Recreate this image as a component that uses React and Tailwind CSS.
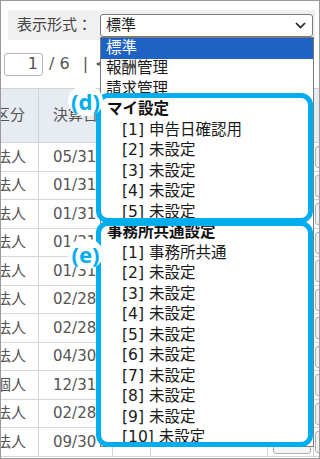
export default function App() {
  const rows = [
    ["法人", "05/31", 29],
    ["法人", "01/31", 28],
    ["法人", "01/31", 29],
    ["法人", "01/31", 28],
    ["法人", "01/31", 29],
    ["法人", "02/28", 28],
    ["法人", "02/28", 29],
    ["法人", "04/30", 28],
    ["個人", "12/31", 29],
    ["法人", "02/28", 28],
    ["法人", "09/30", 29],
  ];
  const my = ["[1] 申告日確認用", "[2] 未設定", "[3] 未設定", "[4] 未設定", "[5] 未設定"];
  const office = [
    "[1] 事務所共通",
    "[2] 未設定",
    "[3] 未設定",
    "[4] 未設定",
    "[5] 未設定",
    "[6] 未設定",
    "[7] 未設定",
    "[8] 未設定",
    "[9] 未設定",
    "[10] 未設定",
  ];

  return (
    <div className="relative w-[320px] h-[459px] overflow-hidden border border-[#9a9a9a] bg-white font-['DejaVu_Sans','Noto_Sans_CJK_JP',sans-serif] text-[#555]">
      {/* top bar */}
      <div className="ml-[7px] mr-[4px] mt-[9px] h-[30px] bg-[#f0f0f0] flex items-center">
        <span className="ml-[9px] text-[15px] text-[#444] leading-none">表示形式：</span>
        <div className="ml-auto mr-[2px] w-[213px] h-[23px] bg-white border border-[#7a7a7a] rounded-[3px] flex items-center pl-[5px] pr-[6px]">
          <span className="text-[15px] text-[#222] leading-none">標準</span>
          <svg className="ml-auto" width="11" height="7" viewBox="0 0 11 7">
            <path d="M1 1 L5.5 5.5 L10 1" fill="none" stroke="#222" strokeWidth="1.7" />
          </svg>
        </div>
      </div>

      {/* pagination */}
      <div className="h-[48px] flex items-center text-[16px] text-[#555]">
        <div className="ml-[3px] w-[39px] h-[23px] border border-[#b5b5b5] rounded-[3px] flex items-center justify-end pr-[4px] leading-none">
          1
        </div>
        <span className="ml-[6px] leading-none">/ 6</span>
        <span className="ml-[13px] leading-none">|</span>
        <span className="ml-[7px] leading-none">&lt;</span>
      </div>

      {/* table */}
      <div className="ml-[-31px] w-[400px]">
        <div className="flex h-[55px] bg-[#e6ecf2] border-t border-b border-[#cfd4da] text-[15px] text-[#555]">
          <div className="w-[69px] border-r border-[#cfd4da] flex items-center pl-[25px]">区分</div>
          <div className="w-[74px] border-r border-[#cfd4da] flex items-center pl-[14px]">決算日</div>
          <div className="w-[38px] border-r border-[#cfd4da]"></div>
          <div className="w-[117px] border-r border-[#cfd4da]"></div>
          <div className="w-[46px] border-r border-[#cfd4da]"></div>
          <div className="w-[40px]"></div>
        </div>
        {rows.map(([k, d, h], i) => (
          <div
            key={i}
            className={`flex border-b border-[#d6d6d6] text-[15px] text-[#555] ${h === 29 ? "h-[29px]" : "h-[28px]"}`}
          >
            <div className="w-[69px] border-r border-[#d6d6d6] flex items-center pl-[26px]">{k}</div>
            <div className="w-[74px] border-r border-[#d6d6d6] flex items-center pl-[14px] text-[15px]">{d}</div>
            <div className="w-[38px] border-r border-[#d6d6d6]"></div>
            <div className="w-[117px] border-r border-[#d6d6d6]"></div>
            <div className="w-[46px] border-r border-[#d6d6d6] flex items-center pl-[5px]">
              <div className="w-[38px] h-[12px] mt-[12px] border border-[#b0b0b0] rounded-[3px] bg-[#f4f4f4]"></div>
            </div>
            <div className="w-[40px] flex items-center pl-[1px]">
              <div className="w-[30px] h-[22px] border border-[#b0b0b0] rounded-[3px] bg-[#f0f0f0]"></div>
            </div>
          </div>
        ))}
      </div>

      {/* dropdown list */}
      <div className="absolute left-[99px] top-[36px] w-[214px] h-[410px] bg-white border border-[#7a7a7a] overflow-hidden text-[15.5px] text-[#1a1a1a]">
        <div className="h-[20.5px] bg-[#1e63c4] text-white flex items-center pl-[5px] leading-none">標準</div>
        <div className="h-[20.5px] flex items-center pl-[5px] leading-none">報酬管理</div>
        <div className="h-[20.5px] flex items-center pl-[5px] leading-none">請求管理</div>
        <div className="h-[20.5px] flex items-center pl-[6px] leading-none font-bold text-[#111]">マイ設定</div>
        {my.map((t, i) => (
          <div key={i} className="h-[20.5px] flex items-center pl-[21px] leading-none">{t}</div>
        ))}
        <div className="h-[20.5px] flex items-center pl-[6px] leading-none font-bold text-[#111]">事務所共通設定</div>
        {office.map((t, i) => (
          <div key={i} className="h-[20.5px] flex items-center pl-[21px] leading-none">{t}</div>
        ))}
      </div>

      {/* annotation boxes */}
      <div className="absolute left-[95px] top-[92px] w-[217px] h-[130px] border-[5px] border-[#00adef] rounded-[12px]"></div>
      <div className="absolute left-[95px] top-[220px] w-[217px] h-[226px] border-[5px] border-[#00adef] rounded-[12px]"></div>

      <div className="absolute left-[67px] top-[85px] w-[35px] h-[30px] bg-white rounded-full flex items-center justify-center text-[22px] font-bold text-[#00adef] leading-none font-['Noto_Sans',sans-serif]">
        (d)
      </div>
      <div className="absolute left-[67px] top-[238px] w-[35px] h-[30px] bg-white rounded-full flex items-center justify-center text-[22px] font-bold text-[#00adef] leading-none font-['Noto_Sans',sans-serif]">
        (e)
      </div>
    </div>
  );
}
